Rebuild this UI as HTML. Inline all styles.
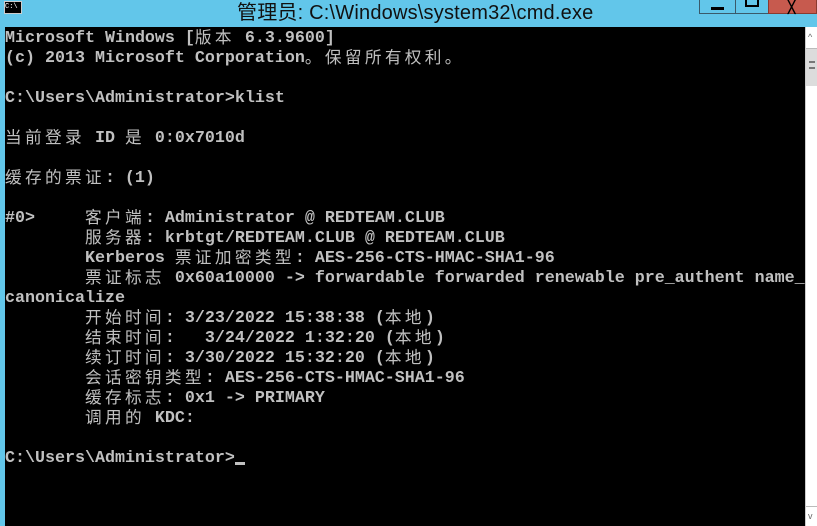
<!DOCTYPE html><html><head><meta charset="utf-8"><style>
body{margin:0;width:817px;height:526px;overflow:hidden;background:#62c6ea;position:relative;font-family:"Liberation Sans","Noto Sans CJK SC",sans-serif}
.t{position:absolute;left:237px;top:-4px;font-size:20px;color:#111;white-space:nowrap;letter-spacing:0.2px}
.ic{position:absolute;left:4px;top:1px;width:16px;height:11px;background:#000;border:1px solid #ccc;color:#fff;font:7px "Liberation Mono",monospace;line-height:11px}
.b{position:absolute;top:0;height:14px;border:1px solid #3a5a6a;border-top:none;box-sizing:border-box}
.con{position:absolute;left:5px;top:27px;width:800px;height:499px;background:#000}
.l{position:absolute;left:0;height:20px;white-space:pre;color:#c0c0c0;font:bold 16.67px/20px "Liberation Mono",monospace;margin-top:2px}
.c{font-family:"Noto Sans CJK SC",sans-serif;font-weight:normal;letter-spacing:3.33px;display:inline-block;height:20px;line-height:20px;vertical-align:top;position:relative;top:-3px}
.sb{position:absolute;left:805px;top:27px;width:12px;height:499px;background:#fff;border-left:1px solid #ccc;box-sizing:border-box}
</style></head><body>
<div class="ic">C:\</div>
<div class="t">管理员: C:\Windows\system32\cmd.exe</div>
<div class="b" style="left:699px;width:37px"><div style="position:absolute;left:11px;top:7px;width:13px;height:3px;background:#000"></div></div>
<div class="b" style="left:735px;width:34px"><div style="position:absolute;left:9px;top:-2px;width:14px;height:9px;border:2px solid #000;border-top:none;box-sizing:border-box"></div></div>
<div class="b" style="left:768px;width:49px;background:#c75a4e;border-color:#8a3a30"><div style="position:absolute;left:19px;top:0;font:bold 12px sans-serif;color:#000">╳</div></div>
<div class="con">
<div class="l" style="top:0">Microsoft Windows [<span class="c">版本</span> 6.3.9600]</div>
<div class="l" style="top:20px">(c) 2013 Microsoft Corporation<span class="c">。保留所有权利。</span></div>
<div class="l" style="top:60px">C:\Users\Administrator&gt;klist</div>
<div class="l" style="top:100px"><span class="c">当前登录</span> ID <span class="c">是</span> 0:0x7010d</div>
<div class="l" style="top:140px"><span class="c">缓存的票证</span>: (1)</div>
<div class="l" style="top:180px">#0&gt;     <span class="c">客户端</span>: Administrator @ REDTEAM.CLUB</div>
<div class="l" style="top:200px">        <span class="c">服务器</span>: krbtgt/REDTEAM.CLUB @ REDTEAM.CLUB</div>
<div class="l" style="top:220px">        Kerberos <span class="c">票证加密类型</span>: AES-256-CTS-HMAC-SHA1-96</div>
<div class="l" style="top:240px">        <span class="c">票证标志</span> 0x60a10000 -&gt; forwardable forwarded renewable pre_authent name_</div>
<div class="l" style="top:260px">canonicalize</div>
<div class="l" style="top:280px">        <span class="c">开始时间</span>: 3/23/2022 15:38:38 (<span class="c">本地</span>)</div>
<div class="l" style="top:300px">        <span class="c">结束时间</span>:   3/24/2022 1:32:20 (<span class="c">本地</span>)</div>
<div class="l" style="top:320px">        <span class="c">续订时间</span>: 3/30/2022 15:32:20 (<span class="c">本地</span>)</div>
<div class="l" style="top:340px">        <span class="c">会话密钥类型</span>: AES-256-CTS-HMAC-SHA1-96</div>
<div class="l" style="top:360px">        <span class="c">缓存标志</span>: 0x1 -&gt; PRIMARY</div>
<div class="l" style="top:380px">        <span class="c">调用的</span> KDC:</div>
<div class="l" style="top:420px">C:\Users\Administrator&gt;<span style="display:inline-block;width:10px;height:3px;background:#c0c0c0;vertical-align:-3px"></span></div>
</div>
<div class="sb">
<div style="position:absolute;left:2px;top:5px;font:9px sans-serif;color:#666">^</div>
<div style="position:absolute;left:0;top:21px;width:12px;height:37px;background:#dcdcdc;border-top:1px solid #bbb"></div>
<div style="position:absolute;left:3px;top:34px;width:6px;height:8px;border-top:2px solid #777;border-bottom:2px solid #777;box-sizing:border-box"></div>
<div style="position:absolute;left:0;top:479px;width:12px;border-top:1px solid #bbb"></div>
<div style="position:absolute;left:2px;top:484px;font:9px sans-serif;color:#666">v</div>
</div>
</body></html>
